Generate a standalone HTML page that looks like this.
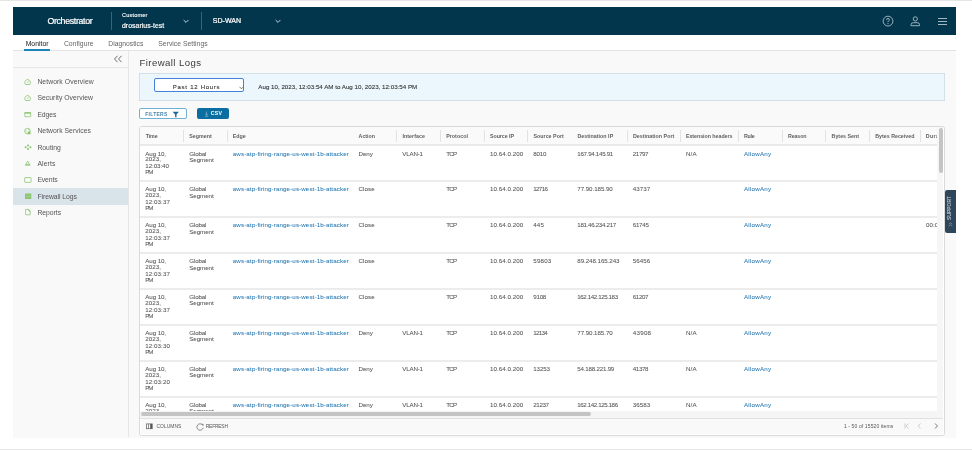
<!DOCTYPE html>
<html><head><meta charset="utf-8"><style>
html,body{margin:0;padding:0;width:972px;height:450px;overflow:hidden;background:#fff;font-family:"Liberation Sans", sans-serif;}
.t{position:absolute;white-space:nowrap;line-height:1;}
.b{position:absolute;}
#pg{position:absolute;left:0;top:0;width:972px;height:450px;overflow:hidden;filter:blur(0.3px);}
</style></head><body><div id="pg">
<div class="b" style="left:0.00px;top:0.00px;width:972.00px;height:1.20px;background:#e6e6e6"></div><div class="b" style="left:0.00px;top:448.60px;width:972.00px;height:1.40px;background:#e6e6e6"></div><div class="b" style="left:12.50px;top:7.00px;width:943.50px;height:430.50px;background:#f9f9f9"></div><div class="b" style="left:12.50px;top:7.00px;width:943.50px;height:27.70px;background:#01364d"></div><div class="t" style="left:47.40px;top:17.00px;font-size:8.8px;color:#fff;font-weight:normal;letter-spacing:-0.326px;-webkit-text-stroke:0.22px #fff">Orchestrator</div><div class="b" style="left:110.50px;top:12.00px;width:0.70px;height:18.00px;background:#3f6376"></div><div class="t" style="left:122.00px;top:13.00px;font-size:5.6px;color:#fff;font-weight:normal;letter-spacing:0.161px;-webkit-text-stroke:0.12px #fff">Customer</div><div class="t" style="left:122.00px;top:23.00px;font-size:6.9px;color:#fff;font-weight:normal;letter-spacing:0.037px;-webkit-text-stroke:0.18px #fff">drosarius-test</div><div class="b" style="left:201.40px;top:12.00px;width:0.70px;height:18.00px;background:#3f6376"></div><div class="t" style="left:212.80px;top:17.00px;font-size:7.0px;color:#fff;font-weight:normal;letter-spacing:0.032px;-webkit-text-stroke:0.22px #fff">SD-WAN</div><svg class="b" style="left:183.30px;top:18.5px" width="6" height="5" viewBox="0 0 6 5"><path d="M0.6 1.0 L3 3.4 L5.4 1.0" stroke="#e8eef2" stroke-width="0.85" fill="none"/></svg><svg class="b" style="left:274.60px;top:18.5px" width="6" height="5" viewBox="0 0 6 5"><path d="M0.6 1.0 L3 3.4 L5.4 1.0" stroke="#e8eef2" stroke-width="0.85" fill="none"/></svg><svg class="b" style="left:880px;top:13px" width="16" height="16" viewBox="0 0 16 16"><circle cx="8" cy="8.1" r="4.9" stroke="#a3b6c1" stroke-width="0.95" fill="none"/><path d="M6.6 6.9 Q6.6 5.5 8 5.5 Q9.4 5.5 9.4 6.8 Q9.4 7.6 8.5 8 Q8 8.3 8 9.1" stroke="#a3b6c1" stroke-width="1" fill="none"/><circle cx="8" cy="10.5" r="0.6" fill="#a3b6c1"/></svg><svg class="b" style="left:907px;top:13px" width="16" height="16" viewBox="0 0 16 16"><circle cx="8.3" cy="5.9" r="2.1" stroke="#a3b6c1" stroke-width="0.95" fill="none"/><path d="M4.0 12.7 L4.0 11.7 Q4.0 9.7 6.5 9.7 L10.1 9.7 Q12.6 9.7 12.6 11.7 L12.6 12.7 Z" stroke="#a3b6c1" stroke-width="0.95" fill="none" stroke-linejoin="round"/></svg><div class="b" style="left:938.00px;top:17.50px;width:9.40px;height:0.95px;background:#a3b6c1"></div><div class="b" style="left:938.00px;top:20.60px;width:9.40px;height:0.95px;background:#a3b6c1"></div><div class="b" style="left:938.00px;top:23.80px;width:9.40px;height:0.95px;background:#a3b6c1"></div><div class="b" style="left:12.50px;top:34.70px;width:943.50px;height:15.60px;background:#fff"></div><div class="b" style="left:12.50px;top:50.00px;width:943.50px;height:0.70px;background:#e3e3e3"></div><div class="t" style="left:25.70px;top:41.00px;font-size:6.8px;color:#333;font-weight:normal;letter-spacing:0.020px;-webkit-text-stroke:0.06px #333">Monitor</div><div class="t" style="left:63.90px;top:41.00px;font-size:6.8px;color:#666;font-weight:normal;letter-spacing:0.015px;">Configure</div><div class="t" style="left:108.30px;top:41.00px;font-size:6.8px;color:#666;font-weight:normal;letter-spacing:-0.006px;">Diagnostics</div><div class="t" style="left:158.30px;top:41.00px;font-size:6.8px;color:#666;font-weight:normal;letter-spacing:0.011px;">Service Settings</div><div class="b" style="left:24.30px;top:49.30px;width:25.80px;height:1.90px;background:#1a84bd"></div><div class="b" style="left:128.00px;top:50.70px;width:0.80px;height:386.80px;background:#e6e6e6"></div><div class="b" style="left:12.50px;top:67.10px;width:115.50px;height:0.70px;background:#e6e6e6"></div><svg class="b" style="left:113px;top:55.4px" width="10" height="8" viewBox="0 0 10 8"><path d="M4.5 0.8 L1.5 4 L4.5 7.2 M8.5 0.8 L5.5 4 L8.5 7.2" stroke="#555" stroke-width="0.85" fill="none"/></svg><div class="b" style="left:12.50px;top:187.80px;width:115.50px;height:16.80px;background:#d9e4ea"></div><div class="t" style="left:37.40px;top:79.00px;font-size:6.8px;color:#555;font-weight:normal;letter-spacing:0.075px;">Network Overview</div><svg class="b" style="left:22px;top:75.65px" width="12" height="12" viewBox="0 0 12 12"><path d="M3.6 8.5 A2.85 2.85 0 1 1 7.6 8.5 Z" stroke="#8cc673" stroke-width="0.85" fill="none" stroke-linejoin="round"/><path d="M5.3 6.9 L6.5 5.3" stroke="#8cc673" stroke-width="0.85"/></svg><div class="t" style="left:37.40px;top:95.00px;font-size:6.8px;color:#555;font-weight:normal;letter-spacing:0.050px;">Security Overview</div><svg class="b" style="left:22px;top:91.99px" width="12" height="12" viewBox="0 0 12 12"><path d="M3.6 8.5 A2.85 2.85 0 1 1 7.6 8.5 Z" stroke="#8cc673" stroke-width="0.85" fill="none" stroke-linejoin="round"/><path d="M5.3 6.9 L6.5 5.3" stroke="#8cc673" stroke-width="0.85"/></svg><div class="t" style="left:37.40px;top:112.00px;font-size:6.8px;color:#555;font-weight:normal;letter-spacing:-0.095px;">Edges</div><svg class="b" style="left:22px;top:108.33px" width="12" height="12" viewBox="0 0 12 12"><rect x="2.8" y="4.6" width="5.9" height="4.1" rx="0.4" stroke="#8cc673" stroke-width="0.8" fill="none"/><rect x="2.5" y="4.3" width="6.5" height="1.3" fill="#8cc673"/></svg><div class="t" style="left:37.40px;top:128.00px;font-size:6.8px;color:#555;font-weight:normal;letter-spacing:0.040px;">Network Services</div><svg class="b" style="left:22px;top:124.67px" width="12" height="12" viewBox="0 0 12 12"><circle cx="5.4" cy="6.1" r="2.8" stroke="#8cc673" stroke-width="0.8" fill="none"/><path d="M3.4 4.9 Q4.6 5.4 4.1 6.8 M5.9 3.4 Q6.3 4.7 7.4 4.9" stroke="#8cc673" stroke-width="0.7" fill="none"/><circle cx="7.1" cy="7.8" r="1.6" fill="#8cc673"/></svg><div class="t" style="left:37.40px;top:145.00px;font-size:6.8px;color:#555;font-weight:normal;letter-spacing:0.012px;">Routing</div><svg class="b" style="left:22px;top:141.01px" width="12" height="12" viewBox="0 0 12 12"><circle cx="6.1" cy="4.5" r="1.05" fill="#8cc673"/><circle cx="6.0" cy="8.0" r="1.05" fill="#8cc673"/><circle cx="3.7" cy="6.25" r="1.05" fill="#8cc673"/><circle cx="8.4" cy="6.25" r="1.05" fill="#8cc673"/></svg><div class="t" style="left:37.40px;top:161.00px;font-size:6.8px;color:#555;font-weight:normal;letter-spacing:0.105px;">Alerts</div><svg class="b" style="left:22px;top:157.35px" width="12" height="12" viewBox="0 0 12 12"><path d="M5.7 4.2 L8.1 8.2 L3.3 8.2 Z" stroke="#8cc673" stroke-width="0.85" fill="none" stroke-linejoin="round"/><path d="M4 7.4 L7.4 7.4" stroke="#8cc673" stroke-width="0.8"/></svg><div class="t" style="left:37.40px;top:177.00px;font-size:6.8px;color:#555;font-weight:normal;letter-spacing:-0.115px;">Events</div><svg class="b" style="left:22px;top:173.69px" width="12" height="12" viewBox="0 0 12 12"><rect x="2.7" y="3.6" width="6.4" height="4.8" rx="0.5" stroke="#8cc673" stroke-width="0.8" fill="none"/><path d="M4.1 3 L4.1 4 M7.7 3 L7.7 4" stroke="#8cc673" stroke-width="0.6"/></svg><div class="t" style="left:37.40px;top:194.00px;font-size:6.8px;color:#555;font-weight:normal;letter-spacing:-0.038px;">Firewall Logs</div><svg class="b" style="left:22px;top:190.03px" width="12" height="12" viewBox="0 0 12 12"><rect x="3.0" y="3.4" width="6.3" height="5.6" rx="0.6" fill="#8cc673"/><path d="M4.4 6.3 L5.7 6.3 M6.6 6.3 L7.9 6.3" stroke="#c5e4b5" stroke-width="0.7"/></svg><div class="t" style="left:37.40px;top:210.00px;font-size:6.8px;color:#555;font-weight:normal;letter-spacing:-0.017px;">Reports</div><svg class="b" style="left:22px;top:206.37px" width="12" height="12" viewBox="0 0 12 12"><path d="M3.6 3.4 L6.3 3.4 L8.2 5.3 L8.2 8.8 L3.6 8.8 Z" stroke="#8cc673" stroke-width="0.8" fill="none" stroke-linejoin="round"/><path d="M6.1 3.4 L8.2 5.5" stroke="#8cc673" stroke-width="1.1"/></svg><div class="t" style="left:139.50px;top:58.00px;font-size:9.6px;color:#3a3a3a;font-weight:normal;letter-spacing:0.413px;">Firewall Logs</div><div class="b" style="left:139.00px;top:73.20px;width:805.50px;height:27.40px;background:#ebf7fd;border:0.8px solid #d2e0e7;box-sizing:border-box"></div><div class="b" style="left:153.60px;top:78.30px;width:90.80px;height:13.40px;background:#fff;border:1px solid #4583d6;border-radius:2px;box-sizing:border-box"></div><div class="t" style="left:172.80px;top:84.00px;font-size:6.0px;color:#333;font-weight:normal;letter-spacing:0.732px;-webkit-text-stroke:0.1px #333">Past 12 Hours</div><svg class="b" style="left:238.5px;top:85.5px" width="5" height="4" viewBox="0 0 5 4"><path d="M0.5 0.8 L2.5 2.8 L4.5 0.8" stroke="#555" stroke-width="0.8" fill="none"/></svg><div class="t" style="left:258.30px;top:84.00px;font-size:6.2px;color:#333;font-weight:normal;letter-spacing:0.007px;-webkit-text-stroke:0.1px #333">Aug 10, 2023, 12:03:54 AM to Aug 10, 2023, 12:03:54 PM</div><div class="b" style="left:138.90px;top:107.90px;width:48.50px;height:10.80px;background:#fff;border:0.8px solid #6fb0d4;border-radius:2px;box-sizing:border-box"></div><div class="t" style="left:145.30px;top:112.00px;font-size:5.0px;color:#4a86ad;font-weight:bold;letter-spacing:0.242px;">FILTERS</div><svg class="b" style="left:171.5px;top:111px" width="8" height="7" viewBox="0 0 8 7"><path d="M0.6 0.8 L7 0.8 L4.5 3.5 L4.5 6.3 L3.1 6.3 L3.1 3.5 Z" fill="#1f6a94"/></svg><div class="b" style="left:197.40px;top:108.10px;width:31.50px;height:10.60px;background:#0b6ea0;border-radius:2px"></div><svg class="b" style="left:204px;top:110.5px" width="5" height="6" viewBox="0 0 5 6"><path d="M2.5 0.5 L2.5 4.2 M1.2 2.9 L2.5 4.2 L3.8 2.9 M0.8 5.3 L4.2 5.3" stroke="#9cc3da" stroke-width="0.6" fill="none"/></svg><div class="t" style="left:210.80px;top:111.00px;font-size:5.2px;color:#fff;font-weight:bold;letter-spacing:0.207px;">CSV</div><div class="b" style="left:139.00px;top:126.20px;width:805.60px;height:309.40px;background:#fff;border:1px solid #dadada;border-radius:2.5px;box-sizing:border-box"></div><div class="b" style="left:140.40px;top:127.40px;width:796.60px;height:16.60px;background:#fafafa"></div><div class="b" style="left:140.40px;top:144.00px;width:796.60px;height:2.00px;background:#e9e9e9"></div><div class="b" style="left:183.15px;top:129.50px;width:0.70px;height:12.40px;background:#e2e2e2"></div><div class="b" style="left:226.55px;top:129.50px;width:0.70px;height:12.40px;background:#e2e2e2"></div><div class="b" style="left:396.25px;top:129.50px;width:0.70px;height:12.40px;background:#e2e2e2"></div><div class="b" style="left:439.85px;top:129.50px;width:0.70px;height:12.40px;background:#e2e2e2"></div><div class="b" style="left:484.05px;top:129.50px;width:0.70px;height:12.40px;background:#e2e2e2"></div><div class="b" style="left:527.25px;top:129.50px;width:0.70px;height:12.40px;background:#e2e2e2"></div><div class="b" style="left:626.65px;top:129.50px;width:0.70px;height:12.40px;background:#e2e2e2"></div><div class="b" style="left:680.15px;top:129.50px;width:0.70px;height:12.40px;background:#e2e2e2"></div><div class="b" style="left:738.25px;top:129.50px;width:0.70px;height:12.40px;background:#e2e2e2"></div><div class="b" style="left:781.55px;top:129.50px;width:0.70px;height:12.40px;background:#e2e2e2"></div><div class="b" style="left:825.15px;top:129.50px;width:0.70px;height:12.40px;background:#e2e2e2"></div><div class="b" style="left:869.05px;top:129.50px;width:0.70px;height:12.40px;background:#e2e2e2"></div><div class="b" style="left:919.75px;top:129.50px;width:0.70px;height:12.40px;background:#e2e2e2"></div><div class="b" style="left:140.4px;top:127.4px;width:796.6px;height:284.1px;overflow:hidden"><div class="t" style="left:5.30px;top:6.60px;font-size:5.3px;color:#606060;font-weight:bold;letter-spacing:-0.090px;">Time</div><div class="t" style="left:48.80px;top:6.60px;font-size:5.3px;color:#606060;font-weight:bold;letter-spacing:0.035px;">Segment</div><div class="t" style="left:92.30px;top:6.60px;font-size:5.3px;color:#606060;font-weight:bold;letter-spacing:0.014px;">Edge</div><div class="t" style="left:218.20px;top:6.60px;font-size:5.3px;color:#606060;font-weight:bold;letter-spacing:-0.017px;">Action</div><div class="t" style="left:262.00px;top:6.60px;font-size:5.3px;color:#606060;font-weight:bold;letter-spacing:0.062px;">Interface</div><div class="t" style="left:305.80px;top:6.60px;font-size:5.3px;color:#606060;font-weight:bold;letter-spacing:0.030px;">Protocol</div><div class="t" style="left:349.60px;top:6.60px;font-size:5.3px;color:#606060;font-weight:bold;letter-spacing:-0.045px;">Source IP</div><div class="t" style="left:393.10px;top:6.60px;font-size:5.3px;color:#606060;font-weight:bold;letter-spacing:0.025px;">Source Port</div><div class="t" style="left:437.00px;top:6.60px;font-size:5.3px;color:#606060;font-weight:bold;letter-spacing:0.035px;">Destination IP</div><div class="t" style="left:492.60px;top:6.60px;font-size:5.3px;color:#606060;font-weight:bold;letter-spacing:0.024px;">Destination Port</div><div class="t" style="left:545.50px;top:6.60px;font-size:5.3px;color:#606060;font-weight:bold;letter-spacing:-0.032px;">Extension headers</div><div class="t" style="left:603.60px;top:6.60px;font-size:5.3px;color:#606060;font-weight:bold;letter-spacing:-0.258px;">Rule</div><div class="t" style="left:647.60px;top:6.60px;font-size:5.3px;color:#606060;font-weight:bold;letter-spacing:-0.127px;">Reason</div><div class="t" style="left:691.20px;top:6.60px;font-size:5.3px;color:#606060;font-weight:bold;letter-spacing:0.011px;">Bytes Sent</div><div class="t" style="left:734.80px;top:6.60px;font-size:5.3px;color:#606060;font-weight:bold;letter-spacing:0.008px;">Bytes Received</div><div class="t" style="left:785.40px;top:6.60px;font-size:5.3px;color:#606060;font-weight:bold;letter-spacing:0.345px;">Duration</div><div class="t" style="left:4.90px;top:23.60px;font-size:6.2px;color:#555;font-weight:normal;letter-spacing:-0.093px;-webkit-text-stroke:0.05px #555">Aug 10,</div><div class="t" style="left:4.90px;top:28.60px;font-size:6.2px;color:#555;font-weight:normal;letter-spacing:0.078px;-webkit-text-stroke:0.05px #555">2023,</div><div class="t" style="left:4.90px;top:35.60px;font-size:6.2px;color:#555;font-weight:normal;letter-spacing:-0.078px;-webkit-text-stroke:0.05px #555">12:03:40</div><div class="t" style="left:4.90px;top:41.60px;font-size:6.2px;color:#555;font-weight:normal;letter-spacing:-1.100px;-webkit-text-stroke:0.05px #555">PM</div><div class="t" style="left:48.80px;top:23.60px;font-size:6.2px;color:#555;font-weight:normal;letter-spacing:-0.124px;-webkit-text-stroke:0.05px #555">Global</div><div class="t" style="left:48.80px;top:29.60px;font-size:6.2px;color:#555;font-weight:normal;letter-spacing:-0.055px;-webkit-text-stroke:0.05px #555">Segment</div><div class="t" style="left:92.40px;top:23.60px;font-size:6.2px;color:#2b7bb5;font-weight:normal;letter-spacing:0.117px;-webkit-text-stroke:0.05px #2b7bb5">aws-atp-firing-range-us-west-1b-attacker</div><div class="t" style="left:218.10px;top:23.60px;font-size:6.2px;color:#555;font-weight:normal;letter-spacing:-0.026px;-webkit-text-stroke:0.05px #555">Deny</div><div class="t" style="left:261.80px;top:23.60px;font-size:6.2px;color:#555;font-weight:normal;letter-spacing:-0.160px;-webkit-text-stroke:0.05px #555">VLAN-1</div><div class="t" style="left:305.80px;top:23.60px;font-size:6.2px;color:#555;font-weight:normal;letter-spacing:-0.750px;-webkit-text-stroke:0.05px #555">TCP</div><div class="t" style="left:349.50px;top:23.60px;font-size:6.2px;color:#555;font-weight:normal;letter-spacing:0.053px;-webkit-text-stroke:0.05px #555">10.64.0.200</div><div class="t" style="left:392.90px;top:23.60px;font-size:6.2px;color:#555;font-weight:normal;letter-spacing:-0.198px;-webkit-text-stroke:0.05px #555">8010</div><div class="t" style="left:436.90px;top:23.60px;font-size:6.2px;color:#555;font-weight:normal;letter-spacing:-0.296px;-webkit-text-stroke:0.05px #555">167.94.145.91</div><div class="t" style="left:492.40px;top:23.60px;font-size:6.2px;color:#555;font-weight:normal;letter-spacing:-0.384px;-webkit-text-stroke:0.05px #555">21797</div><div class="t" style="left:545.60px;top:23.60px;font-size:6.2px;color:#555;font-weight:normal;letter-spacing:0.123px;-webkit-text-stroke:0.05px #555">N/A</div><div class="t" style="left:603.60px;top:23.60px;font-size:6.2px;color:#2b7bb5;font-weight:normal;letter-spacing:0.227px;-webkit-text-stroke:0.05px #2b7bb5">AllowAny</div><div class="b" style="left:0.00px;top:52.60px;width:796.60px;height:2.00px;background:#ececec"></div><div class="t" style="left:4.90px;top:58.60px;font-size:6.2px;color:#555;font-weight:normal;letter-spacing:-0.093px;-webkit-text-stroke:0.05px #555">Aug 10,</div><div class="t" style="left:4.90px;top:64.60px;font-size:6.2px;color:#555;font-weight:normal;letter-spacing:0.078px;-webkit-text-stroke:0.05px #555">2023,</div><div class="t" style="left:4.90px;top:71.60px;font-size:6.2px;color:#555;font-weight:normal;letter-spacing:0.069px;-webkit-text-stroke:0.05px #555">12:03:37</div><div class="t" style="left:4.90px;top:77.60px;font-size:6.2px;color:#555;font-weight:normal;letter-spacing:-1.100px;-webkit-text-stroke:0.05px #555">PM</div><div class="t" style="left:48.80px;top:58.60px;font-size:6.2px;color:#555;font-weight:normal;letter-spacing:-0.124px;-webkit-text-stroke:0.05px #555">Global</div><div class="t" style="left:48.80px;top:65.60px;font-size:6.2px;color:#555;font-weight:normal;letter-spacing:-0.055px;-webkit-text-stroke:0.05px #555">Segment</div><div class="t" style="left:92.40px;top:58.60px;font-size:6.2px;color:#2b7bb5;font-weight:normal;letter-spacing:0.117px;-webkit-text-stroke:0.05px #2b7bb5">aws-atp-firing-range-us-west-1b-attacker</div><div class="t" style="left:218.10px;top:58.60px;font-size:6.2px;color:#555;font-weight:normal;letter-spacing:0.079px;-webkit-text-stroke:0.05px #555">Close</div><div class="t" style="left:305.80px;top:58.60px;font-size:6.2px;color:#555;font-weight:normal;letter-spacing:-0.750px;-webkit-text-stroke:0.05px #555">TCP</div><div class="t" style="left:349.50px;top:58.60px;font-size:6.2px;color:#555;font-weight:normal;letter-spacing:0.053px;-webkit-text-stroke:0.05px #555">10.64.0.200</div><div class="t" style="left:392.90px;top:58.60px;font-size:6.2px;color:#555;font-weight:normal;letter-spacing:-0.659px;-webkit-text-stroke:0.05px #555">12716</div><div class="t" style="left:436.90px;top:58.60px;font-size:6.2px;color:#555;font-weight:normal;letter-spacing:-0.055px;-webkit-text-stroke:0.05px #555">77.90.185.90</div><div class="t" style="left:492.40px;top:58.60px;font-size:6.2px;color:#555;font-weight:normal;letter-spacing:0.066px;-webkit-text-stroke:0.05px #555">43737</div><div class="t" style="left:603.60px;top:58.60px;font-size:6.2px;color:#2b7bb5;font-weight:normal;letter-spacing:0.227px;-webkit-text-stroke:0.05px #2b7bb5">AllowAny</div><div class="b" style="left:0.00px;top:88.60px;width:796.60px;height:2.00px;background:#ececec"></div><div class="t" style="left:4.90px;top:94.60px;font-size:6.2px;color:#555;font-weight:normal;letter-spacing:-0.093px;-webkit-text-stroke:0.05px #555">Aug 10,</div><div class="t" style="left:4.90px;top:100.60px;font-size:6.2px;color:#555;font-weight:normal;letter-spacing:0.078px;-webkit-text-stroke:0.05px #555">2023,</div><div class="t" style="left:4.90px;top:107.60px;font-size:6.2px;color:#555;font-weight:normal;letter-spacing:0.069px;-webkit-text-stroke:0.05px #555">12:03:37</div><div class="t" style="left:4.90px;top:113.60px;font-size:6.2px;color:#555;font-weight:normal;letter-spacing:-1.100px;-webkit-text-stroke:0.05px #555">PM</div><div class="t" style="left:48.80px;top:94.60px;font-size:6.2px;color:#555;font-weight:normal;letter-spacing:-0.124px;-webkit-text-stroke:0.05px #555">Global</div><div class="t" style="left:48.80px;top:101.60px;font-size:6.2px;color:#555;font-weight:normal;letter-spacing:-0.055px;-webkit-text-stroke:0.05px #555">Segment</div><div class="t" style="left:92.40px;top:94.60px;font-size:6.2px;color:#2b7bb5;font-weight:normal;letter-spacing:0.117px;-webkit-text-stroke:0.05px #2b7bb5">aws-atp-firing-range-us-west-1b-attacker</div><div class="t" style="left:218.10px;top:94.60px;font-size:6.2px;color:#555;font-weight:normal;letter-spacing:0.079px;-webkit-text-stroke:0.05px #555">Close</div><div class="t" style="left:305.80px;top:94.60px;font-size:6.2px;color:#555;font-weight:normal;letter-spacing:-0.750px;-webkit-text-stroke:0.05px #555">TCP</div><div class="t" style="left:349.50px;top:94.60px;font-size:6.2px;color:#555;font-weight:normal;letter-spacing:0.053px;-webkit-text-stroke:0.05px #555">10.64.0.200</div><div class="t" style="left:392.90px;top:94.60px;font-size:6.2px;color:#555;font-weight:normal;letter-spacing:0.123px;-webkit-text-stroke:0.05px #555">445</div><div class="t" style="left:436.90px;top:94.60px;font-size:6.2px;color:#555;font-weight:normal;letter-spacing:-0.315px;-webkit-text-stroke:0.05px #555">181.46.234.217</div><div class="t" style="left:492.40px;top:94.60px;font-size:6.2px;color:#555;font-weight:normal;letter-spacing:-0.284px;-webkit-text-stroke:0.05px #555">61745</div><div class="t" style="left:603.60px;top:94.60px;font-size:6.2px;color:#2b7bb5;font-weight:normal;letter-spacing:0.227px;-webkit-text-stroke:0.05px #2b7bb5">AllowAny</div><div class="t" style="left:785.50px;top:94.60px;font-size:6.2px;color:#555;font-weight:normal;letter-spacing:0.069px;-webkit-text-stroke:0.05px #555">00:00:00</div><div class="b" style="left:0.00px;top:124.60px;width:796.60px;height:2.00px;background:#ececec"></div><div class="t" style="left:4.90px;top:130.60px;font-size:6.2px;color:#555;font-weight:normal;letter-spacing:-0.093px;-webkit-text-stroke:0.05px #555">Aug 10,</div><div class="t" style="left:4.90px;top:136.60px;font-size:6.2px;color:#555;font-weight:normal;letter-spacing:0.078px;-webkit-text-stroke:0.05px #555">2023,</div><div class="t" style="left:4.90px;top:143.60px;font-size:6.2px;color:#555;font-weight:normal;letter-spacing:0.069px;-webkit-text-stroke:0.05px #555">12:03:37</div><div class="t" style="left:4.90px;top:149.60px;font-size:6.2px;color:#555;font-weight:normal;letter-spacing:-1.100px;-webkit-text-stroke:0.05px #555">PM</div><div class="t" style="left:48.80px;top:130.60px;font-size:6.2px;color:#555;font-weight:normal;letter-spacing:-0.124px;-webkit-text-stroke:0.05px #555">Global</div><div class="t" style="left:48.80px;top:137.60px;font-size:6.2px;color:#555;font-weight:normal;letter-spacing:-0.055px;-webkit-text-stroke:0.05px #555">Segment</div><div class="t" style="left:92.40px;top:130.60px;font-size:6.2px;color:#2b7bb5;font-weight:normal;letter-spacing:0.117px;-webkit-text-stroke:0.05px #2b7bb5">aws-atp-firing-range-us-west-1b-attacker</div><div class="t" style="left:218.10px;top:130.60px;font-size:6.2px;color:#555;font-weight:normal;letter-spacing:0.079px;-webkit-text-stroke:0.05px #555">Close</div><div class="t" style="left:305.80px;top:130.60px;font-size:6.2px;color:#555;font-weight:normal;letter-spacing:-0.750px;-webkit-text-stroke:0.05px #555">TCP</div><div class="t" style="left:349.50px;top:130.60px;font-size:6.2px;color:#555;font-weight:normal;letter-spacing:0.053px;-webkit-text-stroke:0.05px #555">10.64.0.200</div><div class="t" style="left:392.90px;top:130.60px;font-size:6.2px;color:#555;font-weight:normal;letter-spacing:0.191px;-webkit-text-stroke:0.05px #555">59803</div><div class="t" style="left:436.90px;top:130.60px;font-size:6.2px;color:#555;font-weight:normal;letter-spacing:-0.061px;-webkit-text-stroke:0.05px #555">89.248.165.243</div><div class="t" style="left:492.40px;top:130.60px;font-size:6.2px;color:#555;font-weight:normal;letter-spacing:0.066px;-webkit-text-stroke:0.05px #555">56456</div><div class="t" style="left:603.60px;top:130.60px;font-size:6.2px;color:#2b7bb5;font-weight:normal;letter-spacing:0.227px;-webkit-text-stroke:0.05px #2b7bb5">AllowAny</div><div class="b" style="left:0.00px;top:160.60px;width:796.60px;height:2.00px;background:#ececec"></div><div class="t" style="left:4.90px;top:166.60px;font-size:6.2px;color:#555;font-weight:normal;letter-spacing:-0.093px;-webkit-text-stroke:0.05px #555">Aug 10,</div><div class="t" style="left:4.90px;top:172.60px;font-size:6.2px;color:#555;font-weight:normal;letter-spacing:0.078px;-webkit-text-stroke:0.05px #555">2023,</div><div class="t" style="left:4.90px;top:179.60px;font-size:6.2px;color:#555;font-weight:normal;letter-spacing:0.069px;-webkit-text-stroke:0.05px #555">12:03:37</div><div class="t" style="left:4.90px;top:185.60px;font-size:6.2px;color:#555;font-weight:normal;letter-spacing:-1.100px;-webkit-text-stroke:0.05px #555">PM</div><div class="t" style="left:48.80px;top:166.60px;font-size:6.2px;color:#555;font-weight:normal;letter-spacing:-0.124px;-webkit-text-stroke:0.05px #555">Global</div><div class="t" style="left:48.80px;top:172.60px;font-size:6.2px;color:#555;font-weight:normal;letter-spacing:-0.055px;-webkit-text-stroke:0.05px #555">Segment</div><div class="t" style="left:92.40px;top:166.60px;font-size:6.2px;color:#2b7bb5;font-weight:normal;letter-spacing:0.117px;-webkit-text-stroke:0.05px #2b7bb5">aws-atp-firing-range-us-west-1b-attacker</div><div class="t" style="left:218.10px;top:166.60px;font-size:6.2px;color:#555;font-weight:normal;letter-spacing:0.079px;-webkit-text-stroke:0.05px #555">Close</div><div class="t" style="left:305.80px;top:166.60px;font-size:6.2px;color:#555;font-weight:normal;letter-spacing:-0.750px;-webkit-text-stroke:0.05px #555">TCP</div><div class="t" style="left:349.50px;top:166.60px;font-size:6.2px;color:#555;font-weight:normal;letter-spacing:0.053px;-webkit-text-stroke:0.05px #555">10.64.0.200</div><div class="t" style="left:392.90px;top:166.60px;font-size:6.2px;color:#555;font-weight:normal;letter-spacing:-0.265px;-webkit-text-stroke:0.05px #555">9108</div><div class="t" style="left:436.90px;top:166.60px;font-size:6.2px;color:#555;font-weight:normal;letter-spacing:-0.404px;-webkit-text-stroke:0.05px #555">162.142.125.183</div><div class="t" style="left:492.40px;top:166.60px;font-size:6.2px;color:#555;font-weight:normal;letter-spacing:-0.359px;-webkit-text-stroke:0.05px #555">61207</div><div class="t" style="left:603.60px;top:166.60px;font-size:6.2px;color:#2b7bb5;font-weight:normal;letter-spacing:0.227px;-webkit-text-stroke:0.05px #2b7bb5">AllowAny</div><div class="b" style="left:0.00px;top:196.60px;width:796.60px;height:2.00px;background:#ececec"></div><div class="t" style="left:4.90px;top:202.60px;font-size:6.2px;color:#555;font-weight:normal;letter-spacing:-0.093px;-webkit-text-stroke:0.05px #555">Aug 10,</div><div class="t" style="left:4.90px;top:208.60px;font-size:6.2px;color:#555;font-weight:normal;letter-spacing:0.078px;-webkit-text-stroke:0.05px #555">2023,</div><div class="t" style="left:4.90px;top:215.60px;font-size:6.2px;color:#555;font-weight:normal;letter-spacing:0.069px;-webkit-text-stroke:0.05px #555">12:03:30</div><div class="t" style="left:4.90px;top:221.60px;font-size:6.2px;color:#555;font-weight:normal;letter-spacing:-1.100px;-webkit-text-stroke:0.05px #555">PM</div><div class="t" style="left:48.80px;top:202.60px;font-size:6.2px;color:#555;font-weight:normal;letter-spacing:-0.124px;-webkit-text-stroke:0.05px #555">Global</div><div class="t" style="left:48.80px;top:208.60px;font-size:6.2px;color:#555;font-weight:normal;letter-spacing:-0.055px;-webkit-text-stroke:0.05px #555">Segment</div><div class="t" style="left:92.40px;top:202.60px;font-size:6.2px;color:#2b7bb5;font-weight:normal;letter-spacing:0.117px;-webkit-text-stroke:0.05px #2b7bb5">aws-atp-firing-range-us-west-1b-attacker</div><div class="t" style="left:218.10px;top:202.60px;font-size:6.2px;color:#555;font-weight:normal;letter-spacing:-0.026px;-webkit-text-stroke:0.05px #555">Deny</div><div class="t" style="left:261.80px;top:202.60px;font-size:6.2px;color:#555;font-weight:normal;letter-spacing:-0.160px;-webkit-text-stroke:0.05px #555">VLAN-1</div><div class="t" style="left:305.80px;top:202.60px;font-size:6.2px;color:#555;font-weight:normal;letter-spacing:-0.750px;-webkit-text-stroke:0.05px #555">TCP</div><div class="t" style="left:349.50px;top:202.60px;font-size:6.2px;color:#555;font-weight:normal;letter-spacing:0.053px;-webkit-text-stroke:0.05px #555">10.64.0.200</div><div class="t" style="left:392.90px;top:202.60px;font-size:6.2px;color:#555;font-weight:normal;letter-spacing:-0.684px;-webkit-text-stroke:0.05px #555">12134</div><div class="t" style="left:436.90px;top:202.60px;font-size:6.2px;color:#555;font-weight:normal;letter-spacing:-0.064px;-webkit-text-stroke:0.05px #555">77.90.185.70</div><div class="t" style="left:492.40px;top:202.60px;font-size:6.2px;color:#555;font-weight:normal;letter-spacing:0.266px;-webkit-text-stroke:0.05px #555">43908</div><div class="t" style="left:545.60px;top:202.60px;font-size:6.2px;color:#555;font-weight:normal;letter-spacing:0.123px;-webkit-text-stroke:0.05px #555">N/A</div><div class="t" style="left:603.60px;top:202.60px;font-size:6.2px;color:#2b7bb5;font-weight:normal;letter-spacing:0.227px;-webkit-text-stroke:0.05px #2b7bb5">AllowAny</div><div class="b" style="left:0.00px;top:232.60px;width:796.60px;height:2.00px;background:#ececec"></div><div class="t" style="left:4.90px;top:238.60px;font-size:6.2px;color:#555;font-weight:normal;letter-spacing:-0.093px;-webkit-text-stroke:0.05px #555">Aug 10,</div><div class="t" style="left:4.90px;top:244.60px;font-size:6.2px;color:#555;font-weight:normal;letter-spacing:0.078px;-webkit-text-stroke:0.05px #555">2023,</div><div class="t" style="left:4.90px;top:251.60px;font-size:6.2px;color:#555;font-weight:normal;letter-spacing:0.069px;-webkit-text-stroke:0.05px #555">12:03:20</div><div class="t" style="left:4.90px;top:257.60px;font-size:6.2px;color:#555;font-weight:normal;letter-spacing:-1.100px;-webkit-text-stroke:0.05px #555">PM</div><div class="t" style="left:48.80px;top:238.60px;font-size:6.2px;color:#555;font-weight:normal;letter-spacing:-0.124px;-webkit-text-stroke:0.05px #555">Global</div><div class="t" style="left:48.80px;top:244.60px;font-size:6.2px;color:#555;font-weight:normal;letter-spacing:-0.055px;-webkit-text-stroke:0.05px #555">Segment</div><div class="t" style="left:92.40px;top:238.60px;font-size:6.2px;color:#2b7bb5;font-weight:normal;letter-spacing:0.117px;-webkit-text-stroke:0.05px #2b7bb5">aws-atp-firing-range-us-west-1b-attacker</div><div class="t" style="left:218.10px;top:238.60px;font-size:6.2px;color:#555;font-weight:normal;letter-spacing:-0.026px;-webkit-text-stroke:0.05px #555">Deny</div><div class="t" style="left:261.80px;top:238.60px;font-size:6.2px;color:#555;font-weight:normal;letter-spacing:-0.160px;-webkit-text-stroke:0.05px #555">VLAN-1</div><div class="t" style="left:305.80px;top:238.60px;font-size:6.2px;color:#555;font-weight:normal;letter-spacing:-0.750px;-webkit-text-stroke:0.05px #555">TCP</div><div class="t" style="left:349.50px;top:238.60px;font-size:6.2px;color:#555;font-weight:normal;letter-spacing:0.053px;-webkit-text-stroke:0.05px #555">10.64.0.200</div><div class="t" style="left:392.90px;top:238.60px;font-size:6.2px;color:#555;font-weight:normal;letter-spacing:-0.134px;-webkit-text-stroke:0.05px #555">13253</div><div class="t" style="left:436.90px;top:238.60px;font-size:6.2px;color:#555;font-weight:normal;letter-spacing:-0.212px;-webkit-text-stroke:0.05px #555">54.188.221.99</div><div class="t" style="left:492.40px;top:238.60px;font-size:6.2px;color:#555;font-weight:normal;letter-spacing:-0.359px;-webkit-text-stroke:0.05px #555">41378</div><div class="t" style="left:545.60px;top:238.60px;font-size:6.2px;color:#555;font-weight:normal;letter-spacing:0.123px;-webkit-text-stroke:0.05px #555">N/A</div><div class="t" style="left:603.60px;top:238.60px;font-size:6.2px;color:#2b7bb5;font-weight:normal;letter-spacing:0.227px;-webkit-text-stroke:0.05px #2b7bb5">AllowAny</div><div class="b" style="left:0.00px;top:268.60px;width:796.60px;height:2.00px;background:#ececec"></div><div class="t" style="left:4.90px;top:274.60px;font-size:6.2px;color:#555;font-weight:normal;letter-spacing:-0.093px;-webkit-text-stroke:0.05px #555">Aug 10,</div><div class="t" style="left:4.90px;top:280.60px;font-size:6.2px;color:#555;font-weight:normal;letter-spacing:0.078px;-webkit-text-stroke:0.05px #555">2023,</div><div class="t" style="left:4.90px;top:287.60px;font-size:6.2px;color:#555;font-weight:normal;letter-spacing:0.069px;-webkit-text-stroke:0.05px #555">12:03:10</div><div class="t" style="left:4.90px;top:293.60px;font-size:6.2px;color:#555;font-weight:normal;letter-spacing:-1.100px;-webkit-text-stroke:0.05px #555">PM</div><div class="t" style="left:48.80px;top:274.60px;font-size:6.2px;color:#555;font-weight:normal;letter-spacing:-0.124px;-webkit-text-stroke:0.05px #555">Global</div><div class="t" style="left:48.80px;top:280.60px;font-size:6.2px;color:#555;font-weight:normal;letter-spacing:-0.055px;-webkit-text-stroke:0.05px #555">Segment</div><div class="t" style="left:92.40px;top:274.60px;font-size:6.2px;color:#2b7bb5;font-weight:normal;letter-spacing:0.117px;-webkit-text-stroke:0.05px #2b7bb5">aws-atp-firing-range-us-west-1b-attacker</div><div class="t" style="left:218.10px;top:274.60px;font-size:6.2px;color:#555;font-weight:normal;letter-spacing:-0.026px;-webkit-text-stroke:0.05px #555">Deny</div><div class="t" style="left:261.80px;top:274.60px;font-size:6.2px;color:#555;font-weight:normal;letter-spacing:-0.160px;-webkit-text-stroke:0.05px #555">VLAN-1</div><div class="t" style="left:305.80px;top:274.60px;font-size:6.2px;color:#555;font-weight:normal;letter-spacing:-0.750px;-webkit-text-stroke:0.05px #555">TCP</div><div class="t" style="left:349.50px;top:274.60px;font-size:6.2px;color:#555;font-weight:normal;letter-spacing:0.053px;-webkit-text-stroke:0.05px #555">10.64.0.200</div><div class="t" style="left:392.90px;top:274.60px;font-size:6.2px;color:#555;font-weight:normal;letter-spacing:-0.359px;-webkit-text-stroke:0.05px #555">21237</div><div class="t" style="left:436.90px;top:274.60px;font-size:6.2px;color:#555;font-weight:normal;letter-spacing:-0.404px;-webkit-text-stroke:0.05px #555">162.142.125.186</div><div class="t" style="left:492.40px;top:274.60px;font-size:6.2px;color:#555;font-weight:normal;letter-spacing:0.041px;-webkit-text-stroke:0.05px #555">36583</div><div class="t" style="left:545.60px;top:274.60px;font-size:6.2px;color:#555;font-weight:normal;letter-spacing:0.123px;-webkit-text-stroke:0.05px #555">N/A</div><div class="t" style="left:603.60px;top:274.60px;font-size:6.2px;color:#2b7bb5;font-weight:normal;letter-spacing:0.227px;-webkit-text-stroke:0.05px #2b7bb5">AllowAny</div></div><div class="b" style="left:140.40px;top:411.20px;width:803.00px;height:7.00px;background:#f5f5f5"></div><div class="b" style="left:937.00px;top:127.40px;width:6.40px;height:283.80px;background:#f6f6f6"></div><div class="b" style="left:939.20px;top:128.00px;width:3.60px;height:45.00px;background:#c4c4c4;border-radius:2px"></div><div class="b" style="left:141.00px;top:412.00px;width:450.00px;height:3.80px;background:#c4c4c4;border-radius:2px"></div><div class="b" style="left:140.60px;top:418.60px;width:802.60px;height:15.70px;background:#f9f9f9;border-radius:0 0 2px 2px"></div><div class="b" style="left:140.40px;top:418.00px;width:803.00px;height:0.80px;background:#e0e0e0"></div><svg class="b" style="left:144px;top:421px" width="10" height="10" viewBox="0 0 10 10"><rect x="2.6" y="2.9" width="5.6" height="4.8" stroke="#666" stroke-width="0.75" fill="none"/><line x1="4.5" y1="2.9" x2="4.5" y2="7.7" stroke="#666" stroke-width="0.7"/><rect x="6.2" y="2.9" width="2" height="4.8" fill="#555"/></svg><div class="t" style="left:156.40px;top:425.00px;font-size:4.9px;color:#555;font-weight:normal;letter-spacing:0.083px;">COLUMNS</div><svg class="b" style="left:194.5px;top:421.5px" width="10" height="10" viewBox="0 0 10 10"><path d="M7.6 3.0 A3.2 3.2 0 1 0 8.2 5.8" stroke="#666" stroke-width="0.75" fill="none"/><path d="M6.6 2.4 L8.2 2.2 L8.0 3.9" stroke="#666" stroke-width="0.7" fill="none"/></svg><div class="t" style="left:205.80px;top:425.00px;font-size:4.9px;color:#555;font-weight:normal;letter-spacing:-0.204px;">REFRESH</div><div class="t" style="left:843.90px;top:424.00px;font-size:5.0px;color:#555;font-weight:normal;letter-spacing:0.121px;">1 - 50 of 15520 items</div><svg class="b" style="left:902px;top:422px" width="40" height="8" viewBox="0 0 40 8"><line x1="3" y1="1.5" x2="3" y2="6.5" stroke="#bbb" stroke-width="0.7"/><path d="M6.5 1.5 L4.2 4 L6.5 6.5" stroke="#bbb" stroke-width="0.7" fill="none"/><path d="M18.5 1.5 L16.2 4 L18.5 6.5" stroke="#bbb" stroke-width="0.7" fill="none"/><path d="M33 1.5 L35.5 4 L33 6.5" stroke="#555" stroke-width="0.8" fill="none"/></svg><div class="b" style="left:945.2px;top:190px;width:10.8px;height:43.4px;background:#2e465a;border-radius:2.2px 0 0 2.2px"></div><div class="t" style="left:950.3px;top:207.7px;font-size:4.8px;color:#c3ced6;transform:translate(-50%,-50%) rotate(-90deg);letter-spacing:0.1px;-webkit-text-stroke:0.12px #c3ced6">SUPPORT</div><svg class="b" style="left:947.7px;top:222px" width="5" height="5" viewBox="0 0 5 5"><path d="M0.8 2.2 L2.5 0.8 L4.2 2.2 M0.8 4.2 L2.5 2.8 L4.2 4.2" stroke="#9fb0bd" stroke-width="0.6" fill="none"/></svg>
</div></body></html>
